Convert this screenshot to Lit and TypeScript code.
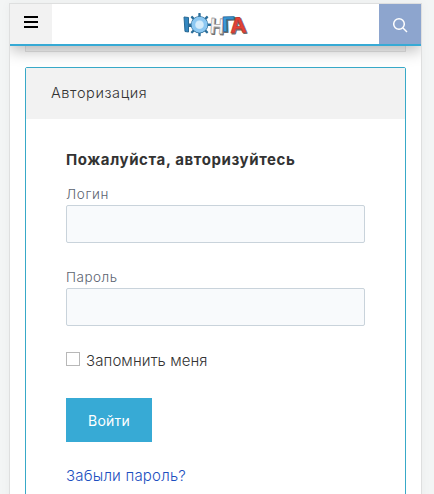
import { LitElement, html, css, svg } from "lit";
import { customElement } from "lit/decorators.js";

@customElement("brand-logo")
class BrandLogo extends LitElement {
  static styles = css`
    :host { display: block; width: 66px; height: 28px; }
    svg { display: block; }
    .glyph { font-family: "Liberation Sans", sans-serif; font-weight: 700; stroke-linejoin: round; }
  `;
  render() {
    const teeth = [0, 45, 90, 135, 180, 225, 270, 315].map(
      (a) => svg`<rect x="-1.2" y="-11.6" width="2.4" height="5" rx=".6" transform="rotate(${a})"></rect>`
    );
    const word = (t: string, x: number, y: number, size: number, fill: string, edge: string, turn: number, w: number) => svg`
      <g transform="translate(${x} ${y}) rotate(${turn})" class="glyph" font-size=${size}>
        <text x="1" y="1" textLength=${w} lengthAdjust="spacingAndGlyphs" fill="#6c6c6c" stroke="#6c6c6c" stroke-width="1.2">${t}</text>
        <text textLength=${w} lengthAdjust="spacingAndGlyphs" fill=${fill} stroke=${edge} stroke-width=".8">${t}</text>
      </g>`;
    return html`<svg width="66" height="28" viewBox="0 0 66 28" aria-label="ЮНГА">
      <path d="M1 5l4.500 .5v14.500l-3.500 -.5z" fill="#3487c0" stroke="#286994"></path>
      <path d="M6 12h3v3h-3z" fill="#286994"></path>
      <g transform="translate(16.500 12.700)" fill="#2c6e99">${teeth}
        <circle r="6.200" fill="none" stroke="#2c6e99" stroke-width="5"></circle>
        <circle r="6.200" fill="#c2e2f6" stroke="#8cc8f2" stroke-width="3.600"></circle>
        <circle r="3.800" fill="#d4ecfb"></circle>
      </g>
      ${word("Н", 26.5, 21, 22, "#f8f8f8", "#a2a2a2", 4, 14)}
      ${word("Г", 39, 19.5, 21, "#3b9bda", "#286da0", -2, 13)}
      ${word("А", 47.5, 21, 22, "#e64234", "#c03a33", -3, 16)}
    </svg>`;
  }
}

@customElement("app-root")
class AppRoot extends LitElement {
  static styles = css`
    :host { display: block; height: 494px; overflow: hidden; background: #f3f5f5; font: 300 15px/20px Inter, sans-serif; color: #333; }
    * { box-sizing: border-box; }
    .page { width: 413px; height: 500px; margin: 3px 0 0 9px; border: 1px solid #dedfdf; background: #fff; box-shadow: 0 0 10px rgba(0,0,0,.04); }
    .bar { position: relative; display: flex; justify-content: space-between; height: 42px; border-bottom: 2px solid #37aad5; background: #fff; box-shadow: 0 5px 15px rgba(0,0,0,.26); clip-path: inset(0 0 -30px 0); }
    .menu, .search { display: flex; width: 42px; height: 40px; padding: 0; border: 0; background: #f2f2f2; }
    .search { background: #8da5ce; }
    .logo { margin: 8px 0 0 1px; }
    .strip { height: 6px; margin: 0 15px; border: 1px solid #e4e4e4; border-top: 0; background: #f6f6f6; }
    .card { height: 450px; margin: 15px 15px 0; border: 1px solid #38a9c8; border-radius: 2px; }
    .title { height: 51px; padding: 15px 25px; background: #f2f2f2; font-size: 14.5px; }
    .title span { letter-spacing: .6px; }
    .form { display: flex; flex-direction: column; align-items: flex-start; padding: 30px 40px; }
    .lead { margin: 0 0 15px; font: 700 15px/22px Inter, sans-serif; letter-spacing: .6px; }
    .label { height: 19px; font-size: 13.5px; line-height: 17px; letter-spacing: .6px; color: #5c6370; }
    .second { letter-spacing: .5px; }
    .field { width: 299px; height: 38px; margin-bottom: 26px; padding: 0 10px; border: 1px solid #c9d3db; border-radius: 2px; background: #f8fafc; outline: 0; }
    .remember { display: flex; align-items: center; height: 20px; margin-top: -2px; }
    .box { width: 14px; height: 14px; margin: 0 6px 2px 0; border: 1px solid #b8b8b8; }
    .check { letter-spacing: .1px; padding-top: 1px; }
    .submit { width: 86px; height: 44px; margin: 28px 0 24px; padding: 1px 0 0; border: 0; background: #37aad5; color: #fff; font: 400 14px/20px Inter, sans-serif; letter-spacing: .2px; }
    .forgot { color: #1d4fc0; text-decoration: none; letter-spacing: .2px; }
  `;
  render() {
    return html`<div class="page">
      <header class="bar">
        <button class="menu" aria-label="Меню"><svg width="42" height="40"><path d="M14 13h14M14 18h14M14 23h14" stroke="#000" stroke-width="2"></path></svg></button>
        <brand-logo class="logo"></brand-logo>
        <button class="search" aria-label="Поиск"><svg width="42" height="40" fill="none" stroke="#fff" stroke-width="1.5"><circle cx="20" cy="20" r="5.300"></circle><path d="M24 24l4 4"></path></svg></button>
      </header>
      <div class="strip"></div>
      <section class="card">
        <div class="title"><span>Авторизация</span></div>
        <div class="form">
          <h1 class="lead">Пожалуйста, авторизуйтесь</h1>
          <label class="label">Логин</label><input class="field">
          <label class="label second">Пароль</label><input class="field" type="password">
          <label class="remember"><span class="box"></span><span class="check">Запомнить меня</span></label>
          <button class="submit">Войти</button>
          <a class="forgot">Забыли пароль?</a>
        </div>
      </section>
    </div>`;
  }
}
